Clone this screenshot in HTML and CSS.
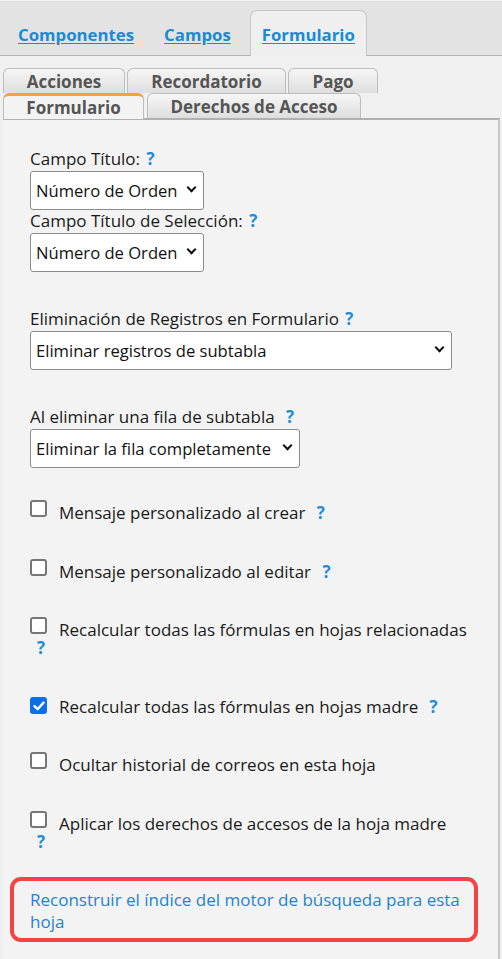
FILE: index.html
```html
<!DOCTYPE html>
<html lang="es">
<head>
<meta charset="utf-8">
<title>Formulario</title>
<link rel="stylesheet" href="styles.css">
</head>
<body>
<div class="topbar">
  <a class="ttab" href="#">Componentes</a>
  <a class="ttab" href="#">Campos</a>
  <a class="ttab active" href="#">Formulario</a>
</div>
<div class="subtabs">
  <div class="strow">
    <span class="stab w-acc">Acciones</span>
    <span class="stab w-rec">Recordatorio</span>
    <span class="stab w-pago">Pago</span>
  </div>
  <div class="strow">
    <span class="stab active w-form">Formulario</span>
    <span class="stab w-der">Derechos de Acceso</span>
  </div>
</div>
<div class="panel">
  <div class="group">
    <div class="lbl">Campo Título: <span class="help">?</span></div>
    <span class="sel w1"><select><option>Número de Orden</option></select></span>
    <div class="lbl">Campo Título de Selección: <span class="help">?</span></div>
    <span class="sel w1"><select><option>Número de Orden</option></select></span>
  </div>
  <div class="group">
    <div class="lbl">Eliminación de Registros en Formulario <span class="help">?</span></div>
    <span class="sel w3"><select><option>Eliminar registros de subtabla</option></select></span>
  </div>
  <div class="group">
    <div class="lbl">Al eliminar una fila de subtabla <span class="help wide">?</span></div>
    <span class="sel w4"><select><option>Eliminar la fila completamente</option></select></span>
  </div>
  <div class="chk"><span class="box"></span><span class="ctext">Mensaje personalizado al crear</span> <span class="help wide">?</span></div>
  <div class="chk"><span class="box"></span><span class="ctext">Mensaje personalizado al editar</span> <span class="help wide">?</span></div>
  <div class="chk"><span class="box"></span><span class="ctext">Recalcular todas las fórmulas en hojas relacionadas</span> <span class="help wide">?</span></div>
  <div class="chk"><span class="box checked"><svg width="12" height="10" viewBox="0 0 12 10"><path d="M1.5 5.2 L4.6 8.2 L10.5 1.6" fill="none" stroke="#fff" stroke-width="2.4" stroke-linecap="round" stroke-linejoin="round"/></svg></span><span class="ctext">Recalcular todas las fórmulas en hojas madre</span> <span class="help wide">?</span></div>
  <div class="chk"><span class="box"></span><span class="ctext">Ocultar historial de correos en esta hoja</span></div>
  <div class="chk"><span class="box"></span><span class="ctext">Aplicar los derechos de accesos de la hoja madre</span> <span class="help wide">?</span></div>
  <div class="rebuild"><a href="#">Reconstruir el índice del motor de búsqueda para esta hoja</a></div>
</div>
</body>
</html>
```
FILE: styles.css
```css
html, body {
  margin: 0;
  padding: 0;
}
body {
  width: 502px;
  height: 959px;
  overflow: hidden;
  background: #f0f0f0;
  font-family: "Open Sans", "Noto Sans", sans-serif;
  color: #1a1a1a;
}
.topbar {
  background: #e3e3e3;
  border-top: 1px solid #f2f2f2;
  border-bottom: 1px solid #b4b4b4;
  box-sizing: border-box;
  height: 56px;
  padding: 9px 0 0 5px;
  display: flex;
  align-items: flex-end;
}
.ttab {
  height: 46px;
  box-sizing: border-box;
  padding: 2px 12px 0;
  margin-right: 4px;
  margin-bottom: -1px;
  display: flex;
  align-items: center;
  font-size: 16.8px;
  font-weight: 700;
  color: #1a8ad4;
  text-decoration: underline;
  text-underline-offset: 2px;
  border: 1px solid transparent;
  border-bottom: none;
  border-radius: 7px 7px 0 0;
}
.ttab.active {
  background: #efefef;
  border-color: #c6c6c6;
  margin-left: 2px;
  padding: 2px 11px 0;
}
.subtabs {
  padding: 12px 0 0 3px;
}
.strow {
  display: flex;
  gap: 2px;
  height: 25px;
}
.stab {
  box-sizing: border-box;
  height: 25px;
  display: flex;
  align-items: center;
  justify-content: center;
  font-size: 17px;
  font-weight: 700;
  color: #555;
  border: 1px solid #bdbdbd;
  border-bottom: none;
  border-radius: 6px 6px 0 0;
  background: linear-gradient(#f6f6f6, #dedede);
  padding-top: 1px;
}
.stab.active {
  background: #f3f3f3;
  border-top: 3px solid #f5a623;
  padding-top: 0;
  position: relative;
  z-index: 2;
  height: 26px;
  margin-bottom: -2px;
}
.w-acc { width: 122px; }
.w-rec { width: 159px; }
.w-pago { width: 90px; }
.w-form { width: 141px; }
.w-der { width: 214px; margin-left: 1px; }
.panel {
  margin-left: 3px;
  width: 497px;
  height: 842px;
  box-sizing: border-box;
  background: #f3f3f3;
  border-top: 2px solid #b0b0b0;
  border-right: 2px solid #c8c8c8;
  padding: 28px 0 0 27px;
  font-size: 17px;
  line-height: 22px;
}
.group {
  display: flex;
  flex-direction: column;
  align-items: flex-start;
  margin-bottom: 36px;
}
.lbl {
  height: 22px;
  margin-bottom: 1px;
  white-space: nowrap;
}
.help {
  color: #1f8dd6;
  font-weight: 700;
  margin-left: 2px;
}
.help.wide {
  margin-left: 7px;
}
.chk .help.wide {
  padding-right: 12px;
}
.sel {
  display: inline-block;
  position: relative;
}
.sel select {
  appearance: none;
  -webkit-appearance: none;
  box-sizing: border-box;
  width: 100%;
  height: 39px;
  border: 1px solid #8c8c8c;
  border-radius: 3px;
  background: #fff;
  font-family: "Open Sans", "Noto Sans", sans-serif;
  font-size: 16.6px;
  color: #111;
  padding: 0 0 0 5px;
  margin: 0;
}
.sel::after {
  content: "";
  position: absolute;
  right: 9px;
  top: 13px;
  width: 5px;
  height: 5px;
  border-right: 2px solid #111;
  border-bottom: 2px solid #111;
  transform: rotate(45deg);
  pointer-events: none;
}
.w1 { width: 174px; }
.w3 { width: 422px; }
.w4 { width: 270px; }
.chk {
  margin-bottom: 40.5px;
  padding-right: 26px;
  line-height: 18px;
}
.box {
  display: inline-flex;
  align-items: center;
  justify-content: center;
  box-sizing: border-box;
  width: 17px;
  height: 17px;
  border: 2px solid #767676;
  border-radius: 3px;
  background: #fff;
  vertical-align: 2px;
  margin: -4px 12px 0 0;
}
.box.checked {
  background: #0a6fe8;
  border-color: #0a6fe8;
}
.ctext {
  color: #1a1a1a;
}
.rebuild {
  margin: -14px 0 0 -20px;
  width: 468px;
  box-sizing: border-box;
  border: 4px solid #f34343;
  border-radius: 11px;
  padding: 8px 12px 5px 16px;
}
.rebuild a {
  color: #1f84cc;
  text-decoration: none;
}
```
